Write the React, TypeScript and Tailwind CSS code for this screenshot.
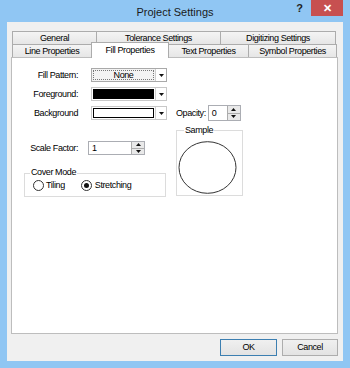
import React from "react";

function Tri({ up = false }: { up?: boolean }) {
  return (
    <svg width="5" height="3" viewBox="0 0 5 3" className="block">
      {up ? <polygon points="0,3 5,3 2.5,0" fill="#111" /> : <polygon points="0,0 5,0 2.5,3" fill="#111" />}
    </svg>
  );
}

function DropArrow() {
  return (
    <div className="w-[11px] h-full bg-white border-l border-[#d0d0d0] flex items-center justify-center">
      <Tri />
    </div>
  );
}

function Spin({ value, className }: { value: string; className: string }) {
  return (
    <div className={"flex bg-white border border-[#abadb3] " + className}>
      <div className="flex-1 pl-[3px] flex items-center leading-none">{value}</div>
      <div className="w-[13px] flex flex-col border-l border-[#acacac] bg-[#e9e9e9]">
        <div className="flex-1 flex items-center justify-center border-b border-[#acacac]">
          <Tri up />
        </div>
        <div className="flex-1 flex items-center justify-center">
          <Tri />
        </div>
      </div>
    </div>
  );
}

function Radio({ checked }: { checked?: boolean }) {
  return (
    <div className="w-[11px] h-[11px] rounded-full border border-[#333] bg-white flex items-center justify-center">
      {checked && <div className="w-[5px] h-[5px] rounded-full bg-[#111]" />}
    </div>
  );
}

export default function App() {
  return (
    <div className="w-[350px] h-[368px] bg-[#90c6f3] flex flex-col font-['Liberation_Sans',Arial,sans-serif] text-[9px] tracking-[-0.4px] text-black overflow-hidden">
      {/* title bar */}
      <div className="h-[22px] grid grid-cols-[1fr_auto_1fr] shrink-0">
        <div />
        <div className="text-[11px] tracking-[0px] text-[#1a1a1a] leading-none pt-[7px]">Project Settings</div>
        <div className="flex justify-end items-start">
          <span className="text-[11px] font-bold tracking-[0px] text-[#222] mt-[3px] mr-[8px] leading-none">?</span>
          <div className="w-[32px] h-[16px] bg-[#c75050] mr-[7px] flex items-center justify-center text-white text-[11px] font-bold tracking-[0px] leading-none">
            ✕
          </div>
        </div>
      </div>

      {/* client */}
      <div className="mx-[7px] h-[339px] bg-[#f0f0f0] pt-[9px] flex flex-col">
        {/* tab row 1 */}
        <div className="ml-[5px] flex h-[14px]">
          <div className="w-[85px] h-full border border-[#acacac] bg-gradient-to-b from-[#f4f4f4] to-[#e6e6e6] flex items-center justify-center leading-none">General</div>
          <div className="-ml-px w-[125px] h-full border border-[#acacac] bg-gradient-to-b from-[#f4f4f4] to-[#e6e6e6] flex items-center justify-center leading-none">Tolerance Settings</div>
          <div className="-ml-px w-[116px] h-full border border-[#acacac] bg-gradient-to-b from-[#f4f4f4] to-[#e6e6e6] flex items-center justify-center leading-none">Digitizing Settings</div>
        </div>
        {/* tab row 2 */}
        <div className="ml-[5px] -mt-px flex items-end h-[13px]">
          <div className="w-[80px] h-full border border-b-0 border-[#acacac] bg-gradient-to-b from-[#f4f4f4] to-[#e6e6e6] flex items-center justify-center leading-none pt-px">Line Properties</div>
          <div className="-ml-px relative z-10 w-[78px] h-[16px] mb-[-1px] border border-b-0 border-[#acacac] bg-white flex items-start justify-center leading-none pt-[3px]">Fill Properties</div>
          <div className="-ml-px w-[81px] h-full border border-b-0 border-[#acacac] bg-gradient-to-b from-[#f4f4f4] to-[#e6e6e6] flex items-center justify-center leading-none pt-px">Text Properties</div>
          <div className="-ml-px w-[89px] h-full border border-b-0 border-[#acacac] bg-gradient-to-b from-[#f4f4f4] to-[#e6e6e6] flex items-center justify-center leading-none pt-px">Symbol Properties</div>
        </div>

        {/* panel */}
        <div className="ml-[4px] w-[327px] h-[277px] bg-white border border-[#bdbdbd] pt-[10px]">
          {/* Fill pattern */}
          <div className="flex items-center h-[14px]">
            <span className="w-[66px] text-right leading-none">Fill Pattern:</span>
            <div className="ml-[13px] w-[76px] h-[14px] flex border border-[#a9a9a9] bg-[#f3f3f3]">
              <div className="flex-1 m-[1px] border border-dotted border-[#777] flex items-center justify-center leading-none">None</div>
              <DropArrow />
            </div>
          </div>
          {/* Foreground */}
          <div className="flex items-center h-[14px] mt-[5px]">
            <span className="w-[66px] text-right leading-none">Foreground:</span>
            <div className="ml-[13px] w-[76px] h-[14px] flex border border-[#c8c8c8] bg-white">
              <div className="flex-1 m-[1px] bg-black" />
              <DropArrow />
            </div>
          </div>
          {/* Background + opacity */}
          <div className="flex items-center h-[16px] mt-[4px]">
            <span className="w-[66px] text-right leading-none">Background</span>
            <div className="ml-[13px] w-[76px] h-[14px] flex border border-[#c8c8c8] bg-white">
              <div className="flex-1 m-[1px] bg-white border border-black" />
              <DropArrow />
            </div>
            <span className="ml-[9px] leading-none">Opacity:</span>
            <Spin value="0" className="ml-[2px] w-[33px] h-[16px]" />
          </div>

          {/* lower section */}
          <div className="flex mt-[9px]">
            <div className="w-[164px] shrink-0">
              <div className="flex items-center h-[14px] mt-[11px]">
                <span className="w-[66px] text-right leading-none">Scale Factor:</span>
                <Spin value="1" className="ml-[10px] w-[57px] h-[14px]" />
              </div>
              <div className="relative ml-[12px] mt-[18px] w-[142px] h-[24px] border border-[#dcdcdc]">
                <span className="absolute left-[5px] -top-[6px] bg-white px-[1px] leading-none">Cover Mode</span>
                <div className="flex items-center h-full pl-[8px]">
                  <Radio />
                  <span className="ml-[2px] leading-none">Tiling</span>
                  <div className="ml-[16px]">
                    <Radio checked />
                  </div>
                  <span className="ml-[3px] leading-none">Stretching</span>
                </div>
              </div>
            </div>
            <div className="relative w-[67px] h-[66px] border border-[#dcdcdc] pl-[1px] pt-[10px]">
              <span className="absolute left-[7px] -top-[5px] bg-white px-[1px] leading-none">Sample</span>
              <svg width="59" height="53" viewBox="0 0 59 53" className="block">
                <ellipse cx="29.5" cy="26.5" rx="28.5" ry="25.8" fill="white" stroke="#333" strokeWidth="1" />
              </svg>
            </div>
          </div>
        </div>

        {/* buttons */}
        <div className="ml-[4px] w-[327px] mt-[5px] flex justify-end gap-[5px]">
          <div className="w-[57px] h-[17px] border border-[#3c7fb1] bg-gradient-to-b from-[#f0f0f0] to-[#e3e3e3] flex items-center justify-center leading-none">OK</div>
          <div className="w-[56px] h-[17px] border border-[#adadad] bg-gradient-to-b from-[#f0f0f0] to-[#e3e3e3] flex items-center justify-center leading-none">Cancel</div>
        </div>
      </div>
    </div>
  );
}
